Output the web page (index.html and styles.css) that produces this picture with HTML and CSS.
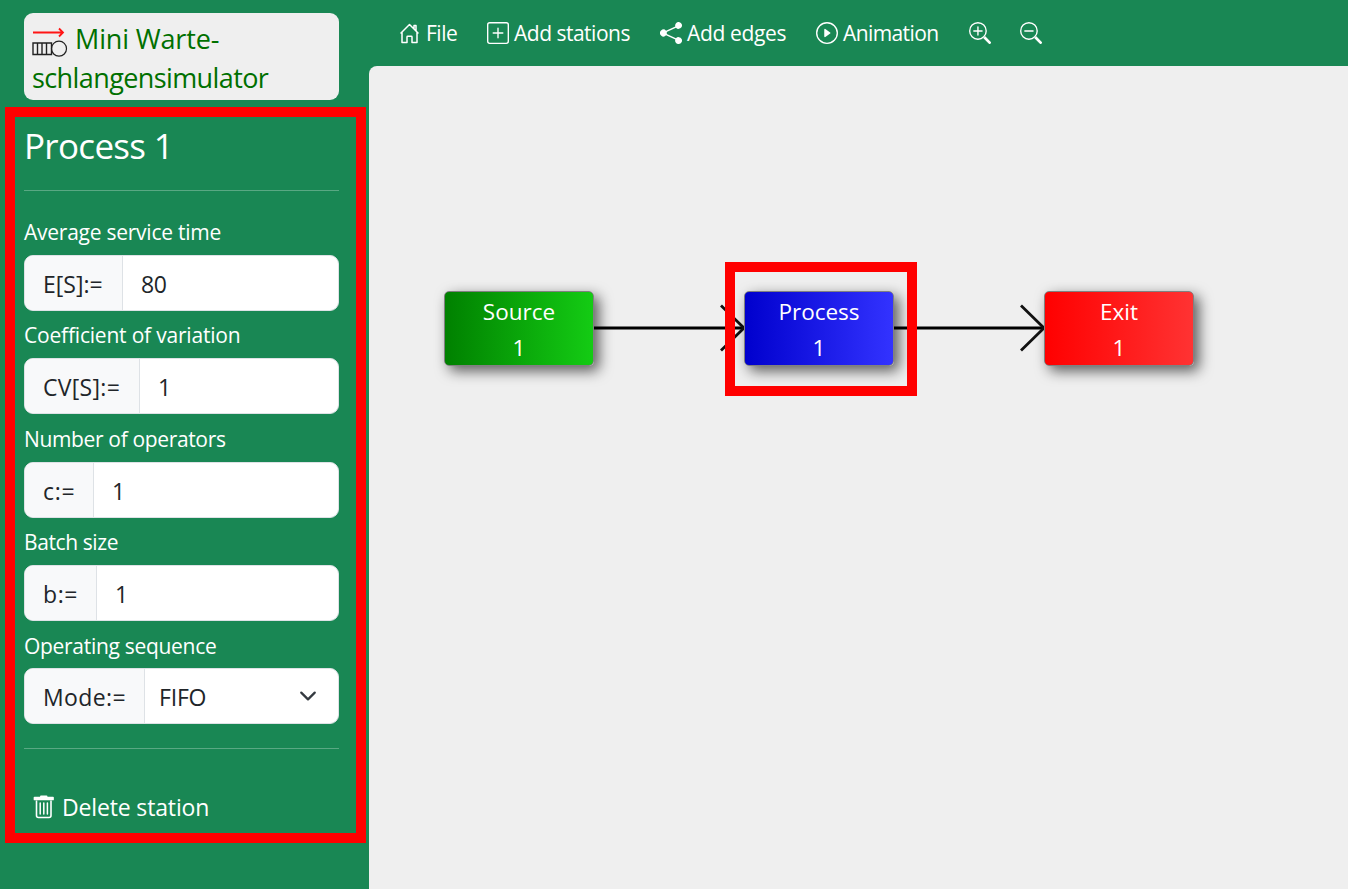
FILE: index.html
```html
<!DOCTYPE html>
<html lang="en">
<head>
<meta charset="utf-8">
<title>Mini Warteschlangensimulator</title>
<link rel="stylesheet" href="styles.css">
</head>
<body>
<div class="app">
  <aside class="sidebar">
    <div class="brand">
      <div class="brand-row">
        <svg class="brand-logo" viewBox="0 0 36 30" width="36" height="30" fill="none">
          <path d="M1 5.500H31M27 1.500L31 5.500L27 9.500" stroke="#ff1515" stroke-width="1.800"/>
          <path d="M1 16H19.500V27.500H1ZM5.500 16V27.500M10 16V27.500M14.500 16V27.500" stroke="#222" stroke-width="1.400"/>
          <circle cx="27" cy="21.700" r="7.500" stroke="#222" stroke-width="1.200"/>
        </svg>
        <span class="brand-a">Mini Warte-</span>
      </div>
      <div class="brand-b">schlangensimulator</div>
    </div>
    <h1 class="title"><span>Process 1</span></h1>
    <hr class="rule">
    <div class="fields">
      <label class="field"><span class="label l1">Average service time</span>
        <span class="group"><span class="prefix p1">E[S]:=</span><span class="value">80</span></span></label>
      <label class="field"><span class="label l2">Coefficient of variation</span>
        <span class="group"><span class="prefix p2">CV[S]:=</span><span class="value">1</span></span></label>
      <label class="field"><span class="label l3">Number of operators</span>
        <span class="group"><span class="prefix p3">c:=</span><span class="value">1</span></span></label>
      <label class="field"><span class="label l4">Batch size</span>
        <span class="group"><span class="prefix p4">b:=</span><span class="value">1</span></span></label>
      <label class="field"><span class="label l5">Operating sequence</span>
        <span class="group"><span class="prefix p5">Mode:=</span><span class="value select"><span>FIFO</span>
          <svg width="18" height="18" viewBox="0 0 16 16" fill="none" stroke="#343a40" stroke-width="2" stroke-linecap="round" stroke-linejoin="round"><path d="m2 5 6 6 6-6"/></svg></span></span></label>
    </div>
    <hr class="rule">
    <div class="delete">
      <svg width="22" height="24" viewBox="0 0 22 24" fill="none" stroke="#fff">
        <path d="M2.500 2.500H21V4.500H2.500Z" fill="#fff" stroke-width="1.700" stroke-linejoin="round"/>
        <path d="M9 1.500H14.500" stroke-width="2" stroke-linecap="round"/>
        <path d="M4.500 5.500V20.500Q4.500 22.500 6.500 22.500H17Q19 22.500 19 20.500V5.500" stroke-width="1.600"/>
        <path d="M8.200 8V19M11.800 8V19M15.400 8V19" stroke-width="1.500" stroke-linecap="round"/>
      </svg>
      <span>Delete station</span>
    </div>
    <div class="mark mark-panel"></div>
  </aside>
  <main class="main">
    <nav class="menu">
      <span class="item i1"><svg width="21" height="22" viewBox="0 0 21 22" fill="none" stroke="#fff" stroke-width="1.500" stroke-linejoin="round" stroke-linecap="round"><path d="M1 11L9.500 2.500L18 11M2 10.200V20.500H7V15Q7 14.300 7.700 14.300H11.300Q12 14.300 12 15V20.500H17V10.200M14 6.500V3.500H16V8.800"/></svg><span>File</span></span>
      <span class="item i2"><svg width="22" height="22" viewBox="0 0 16 16" fill="#fff"><path d="M14 1a1 1 0 0 1 1 1v12a1 1 0 0 1-1 1H2a1 1 0 0 1-1-1V2a1 1 0 0 1 1-1zM2 0a2 2 0 0 0-2 2v12a2 2 0 0 0 2 2h12a2 2 0 0 0 2-2V2a2 2 0 0 0-2-2z"/><path d="M8 4a.5.5 0 0 1 .5.5v3h3a.5.5 0 0 1 0 1h-3v3a.5.5 0 0 1-1 0v-3h-3a.5.5 0 0 1 0-1h3v-3A.5.5 0 0 1 8 4"/></svg><span>Add stations</span></span>
      <span class="item i3"><svg width="22" height="22" viewBox="0 0 16 16" fill="#fff"><path d="M11 2.500a2.500 2.500 0 1 1 .603 1.628l-6.718 3.120a2.500 2.500 0 0 1 0 1.504l6.718 3.120a2.500 2.500 0 1 1-.488.876l-6.718-3.120a2.500 2.500 0 1 1 0-3.256l6.718-3.120A2.500 2.500 0 0 1 11 2.500"/></svg><span>Add edges</span></span>
      <span class="item i4"><svg width="22" height="22" viewBox="0 0 16 16" fill="#fff"><path d="M8 15A7 7 0 1 1 8 1a7 7 0 0 1 0 14m0 1A8 8 0 1 0 8 0a8 8 0 0 0 0 16"/><path d="M6.271 5.055a.5.5 0 0 1 .520.038l3.500 2.500a.5.5 0 0 1 0 .814l-3.500 2.500A.5.5 0 0 1 6 10.500v-5a.5.5 0 0 1 .271-.445"/></svg><span>Animation</span></span>
      <span class="item i5"><svg width="22" height="22" viewBox="0 0 16 16" fill="#fff"><path fill-rule="evenodd" d="M6.500 12a5.500 5.500 0 1 0 0-11 5.500 5.500 0 0 0 0 11M13 6.500a6.500 6.500 0 1 1-13 0 6.500 6.500 0 0 1 13 0"/><path d="M10.344 11.742q.044.060.098.115l3.850 3.850a1 1 0 0 0 1.415-1.414l-3.850-3.850a1 1 0 0 0-.115-.1 6.500 6.500 0 0 1-1.398 1.400z"/><path d="M6.500 3a.5.5 0 0 1 .5.5V6h2.500a.5.5 0 0 1 0 1H7v2.500a.5.5 0 0 1-1 0V7H3.500a.5.5 0 0 1 0-1H6V3.500a.5.5 0 0 1 .5-.5"/></svg></span>
      <span class="item i6"><svg width="22" height="22" viewBox="0 0 16 16" fill="#fff"><path fill-rule="evenodd" d="M6.500 12a5.500 5.500 0 1 0 0-11 5.500 5.500 0 0 0 0 11M13 6.500a6.500 6.500 0 1 1-13 0 6.500 6.500 0 0 1 13 0"/><path d="M10.344 11.742q.044.060.098.115l3.850 3.850a1 1 0 0 0 1.415-1.414l-3.850-3.850a1 1 0 0 0-.115-.1 6.500 6.500 0 0 1-1.398 1.400z"/><path d="M3 6.500a.5.5 0 0 1 .5-.5h6a.5.5 0 0 1 0 1h-6a.5.5 0 0 1-.5-.5"/></svg></span>
    </nav>
    <section class="canvas">
      <svg class="edges" width="979" height="823" viewBox="369 66 979 823" fill="none" stroke="#000" stroke-width="3">
        <path d="M594 328H744M894 328H1044"/>
        <path d="M721 305.500L744 328L721 350.500M1021 305.500L1044 328L1021 350.500" stroke="#111" stroke-width="2.800"/>
      </svg>
      <div class="node source"><span>Source</span><span>1</span></div>
      <div class="node process"><span>Process</span><span>1</span></div>
      <div class="node exit"><span>Exit</span><span>1</span></div>
      <div class="mark mark-node"></div>
    </section>
  </main>
</div>
</body>
</html>
```
FILE: styles.css
```css
* { box-sizing: border-box; }
body { margin: 0; background: #198754; color: #fff; font: 23px/36px "Open Sans", "Noto Sans", sans-serif; letter-spacing: -0.5px; overflow: hidden; }
svg { flex: none; display: block; }
.app { display: flex; height: 889px; }
.sidebar { position: relative; width: 369px; flex: none; padding: 13px 30px 0 24px; white-space: nowrap; }
.brand { height: 87px; padding: 6px 8px; border-radius: 9px; background: #efefef; color: #007000; font-size: 27px; line-height: 39px; }
.brand-row { display: flex; align-items: center; gap: 7px; height: 39px; }
.brand-logo { margin-top: 7px; }
.brand-a { letter-spacing: -0.15px; }
.brand-b { letter-spacing: -0.6px; }
.title { margin: 19px 0 0; height: 68px; font-size: 35px; line-height: 54px; font-weight: 400; letter-spacing: -0.7px; }
.rule { margin: 3px 0 0; height: 1px; border: 0; background: #fff; opacity: .28; }
.fields { padding-top: 17px; }
.field { display: block; height: 103.33px; }
.label { display: block; height: 47px; padding-top: 8px; font-size: 21px; line-height: 33px; }
.l1 { letter-spacing: -0.25px; }
.l2 { letter-spacing: -0.2px; }
.l3 { letter-spacing: -0.35px; }
.l4 { letter-spacing: -0.4px; }
.l5 { padding-top: 8.5px; letter-spacing: -0.3px; }
.group { display: flex; height: 56px; overflow: hidden; border: 1px solid #dee2e6; border-radius: 9px; background: #fff; color: #212529; line-height: 57px; }
.prefix { flex: none; padding-left: 18px; background: #f8f9fa; border-right: 1px solid #dee2e6; }
.p1 { width: 98px; letter-spacing: 0; }
.p2 { width: 115px; letter-spacing: 0.3px; }
.p3 { width: 69px; letter-spacing: 0.7px; }
.p4 { width: 72px; letter-spacing: 0.6px; }
.p5 { width: 120px; letter-spacing: 0.4px; }
.value { flex: 1; padding-left: 18px; }
.select { display: flex; align-items: center; justify-content: space-between; padding: 0 21px 0 14px; letter-spacing: -0.2px; }
.select span { padding-top: 2px; }
.fields + .rule { margin-top: 23.35px; }
.delete { display: flex; align-items: center; gap: 8px; padding-left: 8px; margin-top: 40px; height: 36px; letter-spacing: -0.15px; }
.main { flex: 1; display: flex; flex-direction: column; }
.menu { display: flex; height: 66px; padding-left: 31px; font-size: 21px; white-space: nowrap; }
.item { display: flex; align-items: center; gap: 5px; height: 66px; }
.item svg { margin-top: -1px; }
.i1 { width: 87px; }
.i2 { width: 173px; }
.i3 { width: 156px; letter-spacing: -0.35px; }
.i4 { width: 152.5px; letter-spacing: -0.6px; }
.i5 { width: 51px; }
.canvas { position: relative; flex: 1; border-radius: 8px 0 0 0; background: #efefef; }
.edges { position: absolute; left: 0; top: 0; }
.node { position: absolute; top: 225px; width: 150px; height: 75px; padding-top: 2px; border: 1px solid #808080; border-radius: 5px; box-shadow: 5px 5px 14px rgba(0,0,0,.62); text-align: center; font-size: 22.500px; letter-spacing: 0; }
.node span { display: block; line-height: 36px; }
.source { left: 75px; background: linear-gradient(90deg, #008000, #14cc14) border-box; }
.process { left: 375px; background: linear-gradient(90deg, #0000cd, #3333ff) border-box; }
.exit { left: 675px; background: linear-gradient(90deg, #ff0000, #ff3333) border-box; }
.mark { position: absolute; border: 10px solid #f00; }
.mark-panel { left: 5px; top: 107px; width: 361px; height: 736px; }
.mark-node { left: 356px; top: 196px; width: 192px; height: 134px; }
```
